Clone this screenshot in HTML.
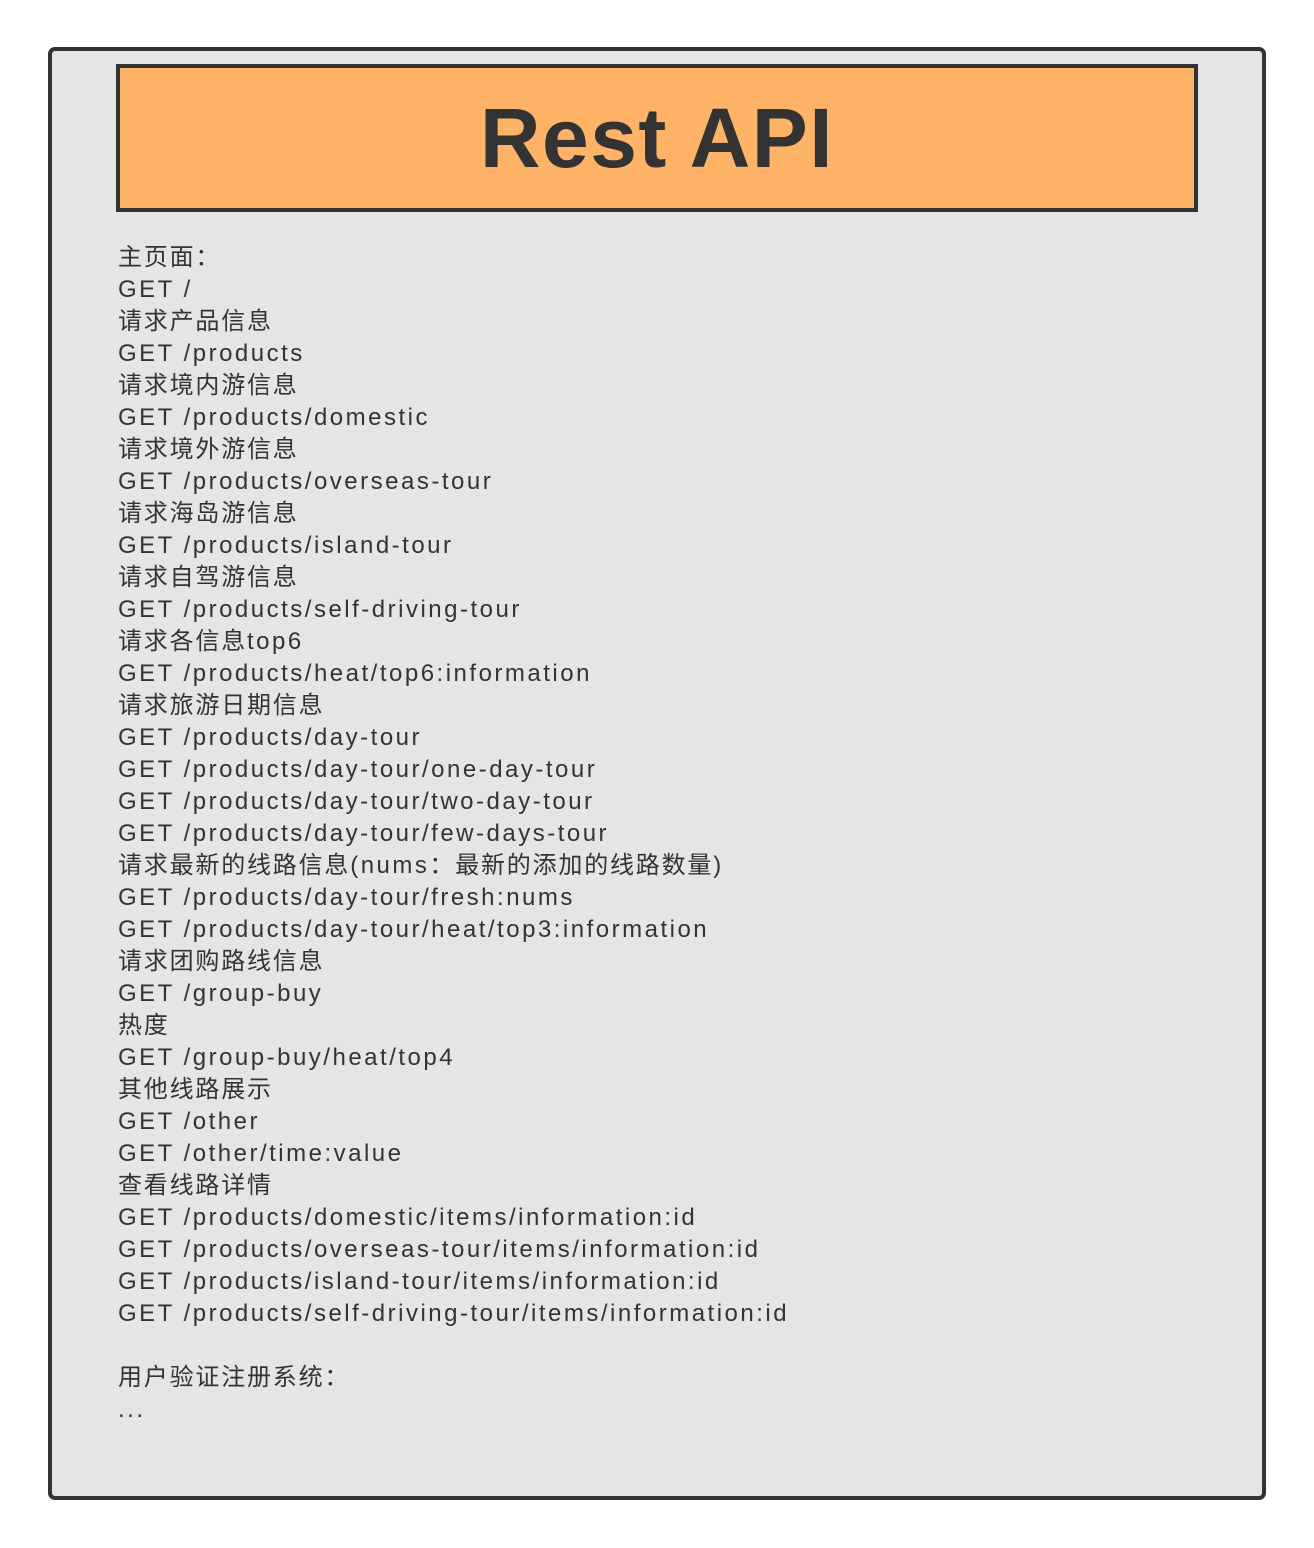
<!DOCTYPE html>
<html><head><meta charset="utf-8"><style>
html,body{margin:0;padding:0;background:#fff;width:1314px;height:1548px;overflow:hidden}
.outer{position:absolute;left:48px;top:47px;width:1210px;height:1445px;border:4px solid #333;border-radius:7px;background:#e5e5e5}
.title{position:absolute;left:116px;top:64px;width:1074px;height:140px;border:4px solid #333;background:#ffb366;text-align:center;font:bold 84px/140px "Liberation Sans",sans-serif;color:#333;letter-spacing:1.5px}
.txt{position:absolute;left:118px;top:242px;font-size:24px;line-height:32px;color:#333;font-family:"Liberation Sans","Noto Sans CJK SC",sans-serif;white-space:pre;letter-spacing:2.5px}
.cn{letter-spacing:1.8px}
</style></head><body>
<div class="outer"></div>
<div class="title">Rest API</div>
<div class="txt"><span class="cn">主页面：</span>
GET /
<span class="cn">请求产品信息</span>
GET /products
<span class="cn">请求境内游信息</span>
GET /products/domestic
<span class="cn">请求境外游信息</span>
GET /products/overseas-tour
<span class="cn">请求海岛游信息</span>
GET /products/island-tour
<span class="cn">请求自驾游信息</span>
GET /products/self-driving-tour
<span class="cn">请求各信息</span>top6
GET /products/heat/top6:information
<span class="cn">请求旅游日期信息</span>
GET /products/day-tour
GET /products/day-tour/one-day-tour
GET /products/day-tour/two-day-tour
GET /products/day-tour/few-days-tour
<span class="cn">请求最新的线路信息</span>(nums<span class="cn">：最新的添加的线路数量</span>)
GET /products/day-tour/fresh:nums
GET /products/day-tour/heat/top3:information
<span class="cn">请求团购路线信息</span>
GET /group-buy
<span class="cn">热度</span>
GET /group-buy/heat/top4
<span class="cn">其他线路展示</span>
GET /other
GET /other/time:value
<span class="cn">查看线路详情</span>
GET /products/domestic/items/information:id
GET /products/overseas-tour/items/information:id
GET /products/island-tour/items/information:id
GET /products/self-driving-tour/items/information:id

<span class="cn">用户验证注册系统：</span>
...</div>
</body></html>
